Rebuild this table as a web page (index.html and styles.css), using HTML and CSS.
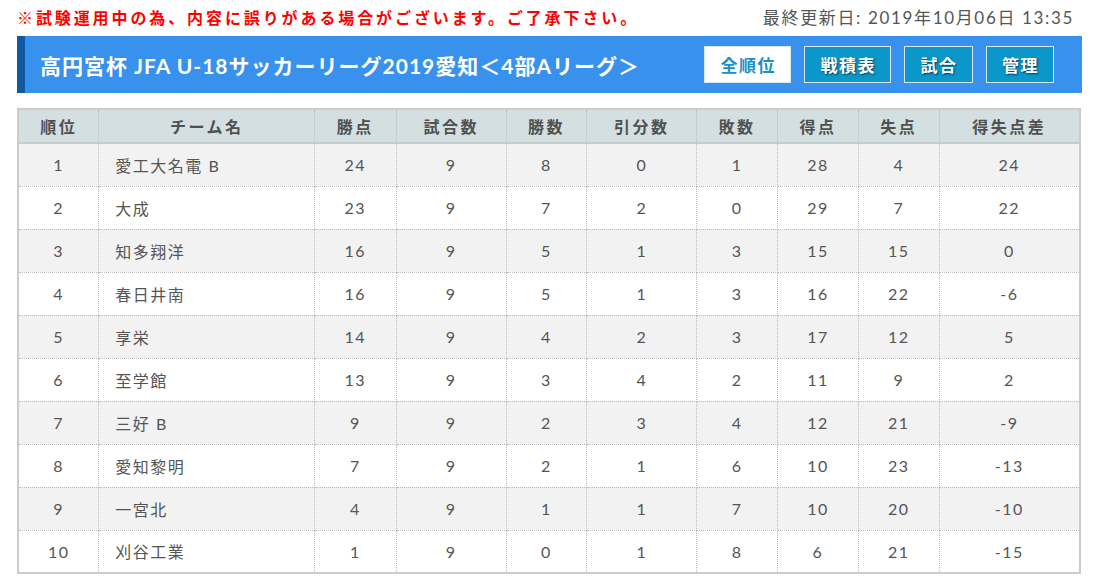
FILE: index.html
```html
<!DOCTYPE html>
<html lang="ja">
<head>
<meta charset="utf-8">
<title>順位表</title>
<link rel="stylesheet" href="styles.css">
</head>
<body>
<div class="page">
  <div class="topline">
    <p class="notice">※試験運用中の為、内容に誤りがある場合がございます。ご了承下さい。</p>
    <p class="updated">最終更新日: 2019年10月06日 13:35</p>
  </div>
  <div class="titlebar">
    <h1 class="title">高円宮杯 JFA U-18サッカーリーグ2019愛知＜4部Aリーグ＞</h1>
    <nav class="tabs">
      <a class="tab active">全順位</a>
      <a class="tab">戦積表</a>
      <a class="tab">試合</a>
      <a class="tab">管理</a>
    </nav>
  </div>
  <table class="standings">
    <thead>
      <tr><th class="c-rank">順位</th><th class="c-team">チーム名</th><th class="c-pts">勝点</th><th class="c-3">試合数</th><th class="c-2">勝数</th><th class="c-3">引分数</th><th class="c-2">敗数</th><th class="c-2">得点</th><th class="c-2">失点</th><th class="c-4">得失点差</th></tr>
    </thead>
    <tbody>
      <tr><td>1</td><td class="team">愛工大名電 B</td><td>24</td><td>9</td><td>8</td><td>0</td><td>1</td><td>28</td><td>4</td><td>24</td></tr>
      <tr><td>2</td><td class="team">大成</td><td>23</td><td>9</td><td>7</td><td>2</td><td>0</td><td>29</td><td>7</td><td>22</td></tr>
      <tr><td>3</td><td class="team">知多翔洋</td><td>16</td><td>9</td><td>5</td><td>1</td><td>3</td><td>15</td><td>15</td><td>0</td></tr>
      <tr><td>4</td><td class="team">春日井南</td><td>16</td><td>9</td><td>5</td><td>1</td><td>3</td><td>16</td><td>22</td><td>-6</td></tr>
      <tr><td>5</td><td class="team">享栄</td><td>14</td><td>9</td><td>4</td><td>2</td><td>3</td><td>17</td><td>12</td><td>5</td></tr>
      <tr><td>6</td><td class="team">至学館</td><td>13</td><td>9</td><td>3</td><td>4</td><td>2</td><td>11</td><td>9</td><td>2</td></tr>
      <tr><td>7</td><td class="team">三好 B</td><td>9</td><td>9</td><td>2</td><td>3</td><td>4</td><td>12</td><td>21</td><td>-9</td></tr>
      <tr><td>8</td><td class="team">愛知黎明</td><td>7</td><td>9</td><td>2</td><td>1</td><td>6</td><td>10</td><td>23</td><td>-13</td></tr>
      <tr><td>9</td><td class="team">一宮北</td><td>4</td><td>9</td><td>1</td><td>1</td><td>7</td><td>10</td><td>20</td><td>-10</td></tr>
      <tr><td>10</td><td class="team">刈谷工業</td><td>1</td><td>9</td><td>0</td><td>1</td><td>8</td><td>6</td><td>21</td><td>-15</td></tr>
    </tbody>
  </table>
</div>
</body>
</html>
```

FILE: styles.css
```css
* { box-sizing: border-box; }
html, body { margin: 0; padding: 0; background: #fff; }
body {
  font-family: Lato, "Noto Sans CJK JP", sans-serif;
  color: #555;
}
.page {
  width: 1065px;
  margin-left: 17px;
}
.topline {
  display: flex;
  justify-content: space-between;
  align-items: center;
  height: 36px;
  padding-bottom: 3px;
}
.notice {
  margin: 0;
  color: #f00;
  font-weight: bold;
  font-size: 16px;
  letter-spacing: 2.9px;
  font-family: "Noto Sans CJK JP", sans-serif;
}
.updated {
  margin: 0 8px 0 0;
  font-size: 17px;
  letter-spacing: 1.65px;
  color: #555;
}
.titlebar {
  display: flex;
  align-items: center;
  justify-content: space-between;
  height: 57px;
  background: #3891ec;
  border-left: 8px solid #0f5aa0;
  padding: 0 28px 0 15px;
}
.title {
  margin: 0;
  color: #fff;
  font-size: 21px;
  font-weight: bold;
  letter-spacing: 1px;
}
.tabs {
  display: flex;
  gap: 13px;
}
.tab {
  display: flex;
  align-items: center;
  justify-content: center;
  height: 37px;
  padding: 0 14px 0 15.5px;
  background: #0b97c9;
  border: 1px solid #d7e6ef;
  color: #fff;
  font-weight: bold;
  font-size: 17px;
  letter-spacing: 1.5px;
  text-shadow: 1px 1px 2px rgba(0,0,0,0.6);
  font-family: "Noto Sans CJK JP", sans-serif;
}
.tab.active {
  background: #fff;
  color: #1a8fc8;
  text-shadow: none;
}
.standings {
  margin-top: 15px;
  width: 1064px;
  border-collapse: collapse;
  border: 2px solid #ccc;
  font-size: 16px;
  letter-spacing: 1.5px;
}
.standings th,
.standings td {
  border: 1px dotted #bbb;
  text-align: center;
  padding: 0;
}
.standings th {
  height: 34px;
  background: #d3dfe0;
  font-weight: bold;
  color: #505050;
  border-bottom: 2px solid #c4cccd;
  font-family: "Noto Sans CJK JP", sans-serif;
  font-size: 16px;
  letter-spacing: 2.5px;
}
.standings td { height: 43px; }
.standings tbody tr:nth-child(odd) td { background: #f2f2f2; }
.standings td.team { text-align: left; padding-left: 16px; }
.c-rank { width: 81px; }
.c-team { width: 216px; }
.c-pts { width: 82px; }
.c-3 { width: 110px; }
.c-2 { width: 81px; }
.c-4 { width: 141px; }
```
